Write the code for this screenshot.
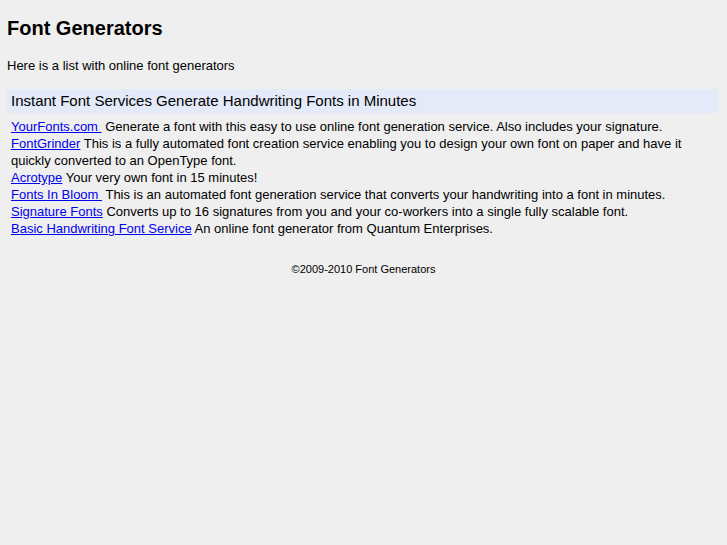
import React from 'react';

const services = [
  { name: 'YourFonts.com\u00a0', text: 'Generate a font with this easy to use online font generation service. Also includes your signature.' },
  { name: 'FontGrinder', text: 'This is a fully automated font creation service enabling you to design your own font on paper and have it quickly converted to an OpenType font.' },
  { name: 'Acrotype', text: 'Your very own font in 15 minutes!' },
  { name: 'Fonts In Bloom\u00a0', text: 'This is an automated font generation service that converts your handwriting into a font in minutes.' },
  { name: 'Signature Fonts', text: 'Converts up to 16 signatures from you and your co-workers into a single fully scalable font.' },
  { name: 'Basic Handwriting Font Service', text: 'An online font generator from Quantum Enterprises.' },
];

const App = () => {
  return (
    <div className="min-h-[545px] bg-[#efefef] px-[7px] pt-[16px] text-black" style={{ fontFamily: '"Liberation Sans", Arial, sans-serif' }}>
      <h1 className="text-[20px] font-bold leading-[24px]">Font Generators</h1>
      <p className="mt-[18px] text-[13px] leading-[16px]">Here is a list with online font generators</p>
      <div className="mt-[15px] w-[711px]">
        <h2 className="bg-[#e4eaf7] px-[4px] py-[2px] text-[15px] leading-[20px]">
          Instant Font Services Generate Handwriting Fonts in Minutes
        </h2>
        <ul className="mt-[5px] px-[4px] text-[13px] leading-[17px]">
          {services.map((s) => (
            <li key={s.name}>
              <a href="#" className="text-[#0000ee] underline">{s.name}</a> {s.text}
            </li>
          ))}
        </ul>
      </div>
      <p className="mt-[25px] text-center text-[11px] leading-[14px]">©2009-2010 Font Generators</p>
    </div>
  );
};

export default App;
